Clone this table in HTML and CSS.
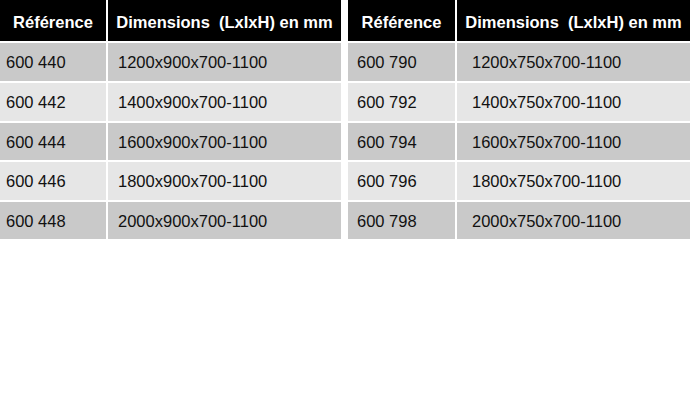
FILE: index.html
```html
<!DOCTYPE html>
<html lang="fr">
<head>
<meta charset="utf-8">
<title>Références</title>
<link rel="stylesheet" href="styles.css">
</head>
<body>
<div class="tables">
  <div class="grid grid-left">
    <div class="cell head">Référence</div>
    <div class="cell head">Dimensions&nbsp; (LxlxH) en mm</div>
    <div class="cell dark ref">600 440</div>
    <div class="cell dark dim">1200x900x700-1100</div>
    <div class="cell light ref">600 442</div>
    <div class="cell light dim">1400x900x700-1100</div>
    <div class="cell dark ref">600 444</div>
    <div class="cell dark dim">1600x900x700-1100</div>
    <div class="cell light ref">600 446</div>
    <div class="cell light dim">1800x900x700-1100</div>
    <div class="cell dark ref">600 448</div>
    <div class="cell dark dim">2000x900x700-1100</div>
  </div>
  <div class="grid grid-right">
    <div class="cell head">Référence</div>
    <div class="cell head">Dimensions&nbsp; (LxlxH) en mm</div>
    <div class="cell dark ref">600 790</div>
    <div class="cell dark dim">1200x750x700-1100</div>
    <div class="cell light ref">600 792</div>
    <div class="cell light dim">1400x750x700-1100</div>
    <div class="cell dark ref">600 794</div>
    <div class="cell dark dim">1600x750x700-1100</div>
    <div class="cell light ref">600 796</div>
    <div class="cell light dim">1800x750x700-1100</div>
    <div class="cell dark ref">600 798</div>
    <div class="cell dark dim">2000x750x700-1100</div>
  </div>
</div>
</body>
</html>
```
FILE: styles.css
```css
html, body {
  margin: 0;
  padding: 0;
  background: #ffffff;
}
body {
  font-family: "Liberation Sans", Arial, sans-serif;
  font-size: 16.5px;
  color: #111111;
}
.tables {
  display: flex;
  gap: 7px;
  align-items: flex-start;
}
.grid {
  display: grid;
  grid-template-rows: 41px 38px 38px 37px 38px 37px;
  gap: 2px;
}
.grid-left {
  grid-template-columns: 106px 233px;
}
.grid-right {
  grid-template-columns: 107px 233px;
}
.cell {
  display: flex;
  align-items: center;
  white-space: nowrap;
  padding-top: 1px;
}
.head {
  background: #000000;
  color: #ffffff;
  font-weight: bold;
  justify-content: center;
  padding-top: 4px;
}
.dark {
  background: #c9c9c9;
}
.light {
  background: #e6e6e6;
}
.grid-left .ref {
  padding-left: 6px;
}
.grid-left .dim {
  padding-left: 10px;
}
.grid-right .ref {
  padding-left: 9px;
}
.grid-right .dim {
  padding-left: 15px;
}
```
